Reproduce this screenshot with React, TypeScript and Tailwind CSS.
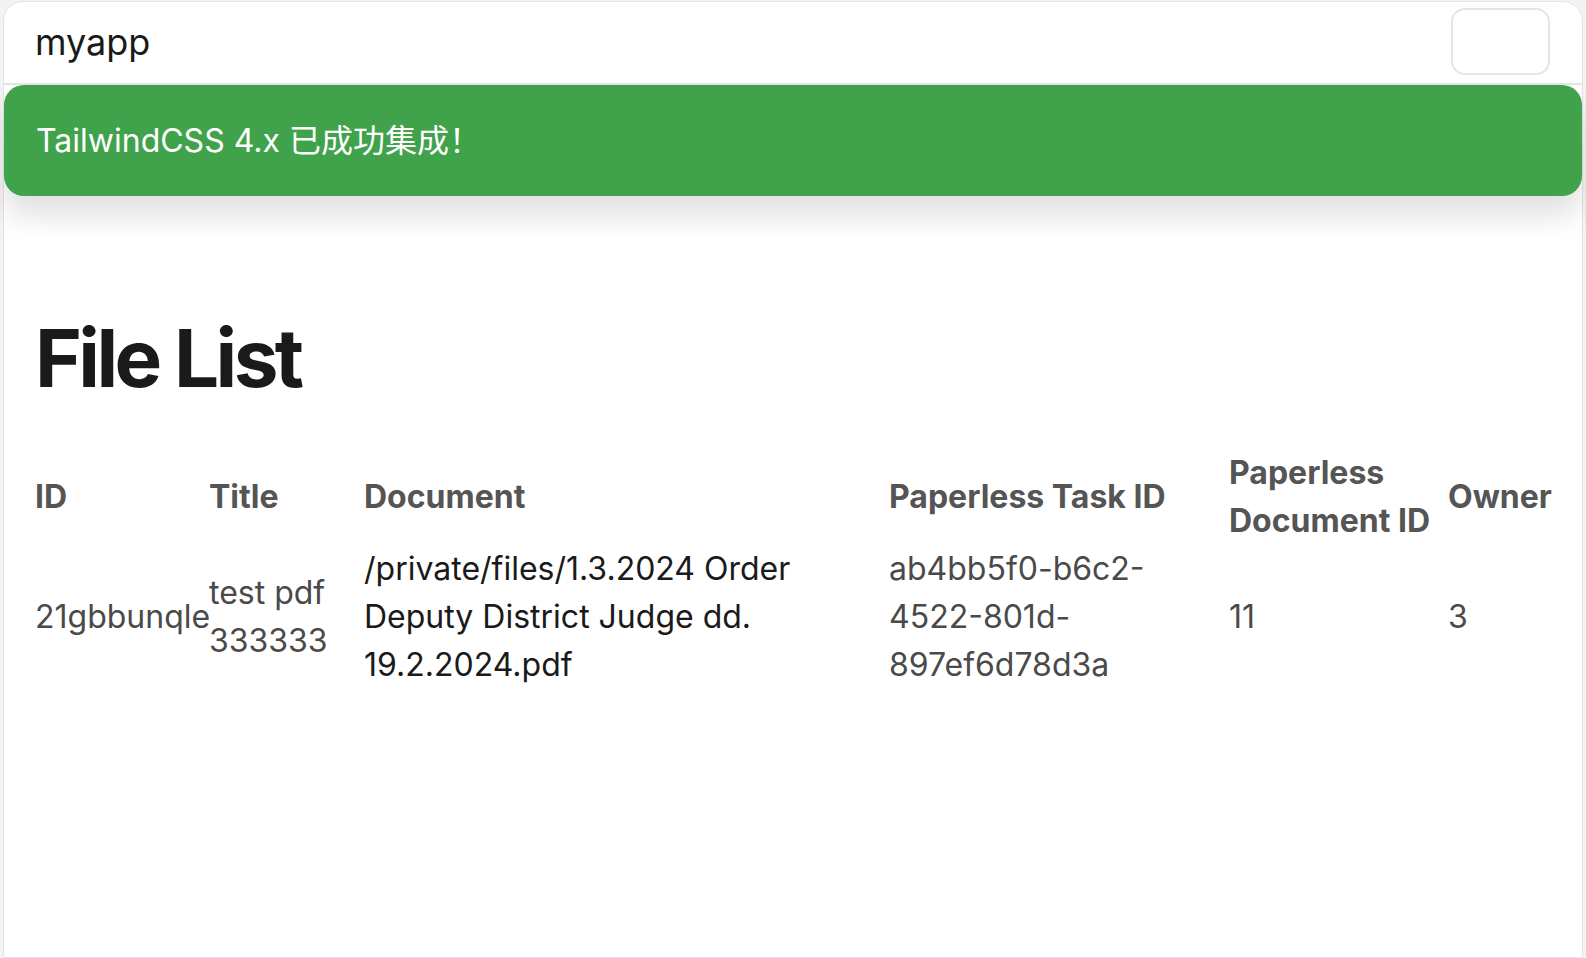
const files = [
  {
    id: '21gbbunqle',
    title: 'test pdf 333333',
    document: '/private/files/1.3.2024 Order Deputy District Judge dd. 19.2.2024.pdf',
    taskId: 'ab4bb5f0-b6c2-4522-801d-897ef6d78d3a',
    documentId: '11',
    owner: '3',
  },
];

const App = () => {
  return (
    <div
      className="min-h-screen bg-[#f3f3f3] pl-[3px] pr-[3px] pt-[1px]"
      style={{ fontFamily: 'Inter, "Noto Sans CJK SC", sans-serif' }}
    >
      <div className="min-h-[957px] rounded-t-[20px] border border-[#e4e4e4] bg-white">
        {/* Header */}
        <header className="flex h-[83px] items-center justify-between border-b-2 border-[#e5e5e5] pl-[31px] pr-[32px]">
          <span className="-mt-[2px] text-[36px] text-[#1a1a1a]">myapp</span>
          <button className="-mt-[2px] h-[67px] w-[99px] rounded-[14px] border-2 border-[#e5e5e5] bg-white" />
        </header>

        {/* Banner */}
        <div className="flex h-[111px] items-center rounded-[20px] bg-[#40a34c] pl-[32px] text-[32px] text-white shadow-[0_20px_30px_rgba(0,0,0,0.12)]">
          TailwindCSS 4.x 已成功集成！
        </div>

        <main className="pl-[31px] pr-[31px] pt-[114px]">
          <h1 className="text-[80px] font-bold leading-[96px] tracking-[-0.045em] text-[#1a1a1a]">File List</h1>

          <table className="mt-[43px] w-full table-fixed border-collapse text-left text-[32px] leading-[48px]">
            <colgroup>
              <col className="w-[174px]" />
              <col className="w-[155px]" />
              <col className="w-[525px]" />
              <col className="w-[340px]" />
              <col className="w-[219px]" />
              <col />
            </colgroup>
            <thead>
              <tr className="font-semibold text-[#555555]">
                <th className="p-0 align-middle">ID</th>
                <th className="p-0 align-middle">Title</th>
                <th className="p-0 align-middle">Document</th>
                <th className="p-0 align-middle">Paperless Task ID</th>
                <th className="p-0 align-middle">Paperless Document ID</th>
                <th className="p-0 align-middle">Owner</th>
              </tr>
            </thead>
            <tbody>
              {files.map((f) => (
                <tr key={f.id}>
                  <td className="p-0 align-middle text-[#4a4a4a]">{f.id}</td>
                  <td className="p-0 align-middle text-[#4a4a4a]">{f.title}</td>
                  <td className="p-0 align-middle text-[#1a1a1a]">{f.document}</td>
                  <td className="p-0 align-middle text-[#4a4a4a]">{f.taskId}</td>
                  <td className="p-0 align-middle text-[#4a4a4a]">{f.documentId}</td>
                  <td className="p-0 align-middle text-[#4a4a4a]">{f.owner}</td>
                </tr>
              ))}
            </tbody>
          </table>
        </main>
      </div>
    </div>
  );
};

export default App;
